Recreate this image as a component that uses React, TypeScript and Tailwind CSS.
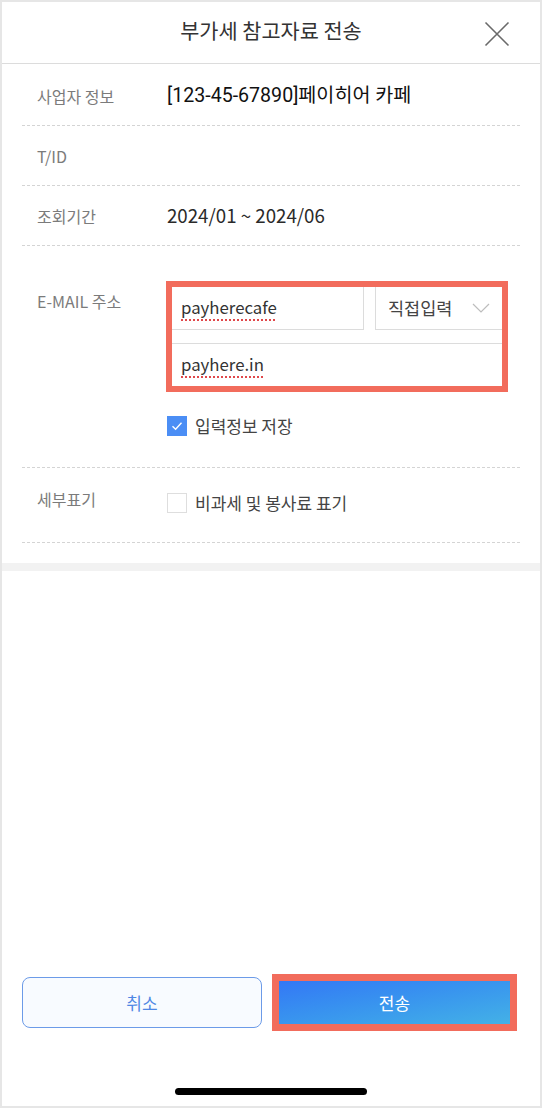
import { useState } from 'react';

const KR = { fontFamily: '"Noto Sans CJK KR", "Noto Sans", sans-serif' };
const RB = { fontFamily: 'Roboto, "Noto Sans CJK KR", sans-serif' };

function CheckBox({ checked }: { checked: boolean }) {
  return checked ? (
    <span className="flex h-[20px] w-[20px] items-center justify-center bg-[#4b8ef5]">
      <svg width="12" height="10" viewBox="0 0 12 10" fill="none">
        <path d="M1.5 5.2L4.6 8.2L10.5 1.8" stroke="#fff" strokeWidth="1.4" />
      </svg>
    </span>
  ) : (
    <span className="h-[20px] w-[20px] border-[1.5px] border-[#dedede] bg-white" />
  );
}

function Row({ label, children }: { label: string; children?: React.ReactNode }) {
  return (
    <div className="flex h-[60px] items-center border-b border-dashed border-[#d4d4d4]">
      <div className="w-[145px] pl-[15px] text-[16px] text-[#7b7b7b]">{label}</div>
      <div className="text-[18.7px] text-[#2a2a2a]">{children}</div>
    </div>
  );
}

export default function App() {
  const [save, setSave] = useState(true);
  const [detail, setDetail] = useState(false);

  return (
    <div className="flex h-[1108px] w-[542px] flex-col border-2 border-[#e6e6e6] bg-white" style={KR}>
      {/* header */}
      <div className="relative flex h-[62px] items-center justify-center border-b-[1.5px] border-[#dcdcdc] pb-[3px]">
        <span className="text-[20.8px] text-[#333]">부가세 참고자료 전송</span>
        <button className="absolute right-[30px] top-[19px]">
          <svg width="26" height="26" viewBox="0 0 26 26" fill="none">
            <path d="M1.5 1.5L24.5 24.5M24.5 1.5L1.5 24.5" stroke="#6a6a6a" strokeWidth="1.6" />
          </svg>
        </button>
      </div>

      <div className="px-[20px]">
        <div className="flex h-[62px] items-center border-b border-dashed border-[#d4d4d4] pt-[3px]">
          <div className="w-[145px] pl-[15px] text-[16px] text-[#7b7b7b]">사업자 정보</div>
          <div className="text-[19.6px] text-[#111]" style={RB}>[123-45-67890]페이히어 카페</div>
        </div>
        <Row label="T/ID" />
        <Row label="조회기간">2024/01 ~ 2024/06</Row>

        {/* email */}
        <div className="flex border-b border-dashed border-[#d4d4d4] pb-[31px] pt-[35px]">
          <div className="w-[144px] pl-[15px] pt-[10px] text-[16px] leading-[20px] text-[#7b7b7b]">E-MAIL 주소</div>
          <div className="flex flex-col">
            <div className="w-[342px] border-[6px] border-[#f26c5c]">
              <div className="flex h-[43px]">
                <div className="flex w-[192px] items-center border-b border-r border-[#dcdcdc] pl-[9px] text-[16.8px] text-[#333]">
                  <span className="underline decoration-[#e0484b] decoration-dotted decoration-[1.5px] underline-offset-[5px]">payherecafe</span>
                </div>
                <div className="ml-[11px] flex flex-1 items-center justify-between border-b border-l border-[#dcdcdc] pl-[12px] pr-[12px] text-[17.5px] text-[#444]">
                  <span>직접입력</span>
                  <svg width="18" height="10" viewBox="0 0 18 10" fill="none">
                    <path d="M1 1L9 9L17 1" stroke="#bdbdbd" strokeWidth="1.2" />
                  </svg>
                </div>
              </div>
              <div className="mt-[13px] flex h-[43px] items-center border-t border-[#dcdcdc] pl-[9px] text-[16.8px] text-[#333]">
                <span className="underline decoration-[#e0484b] decoration-dotted decoration-[1.5px] underline-offset-[5px]">payhere.in</span>
              </div>
            </div>
            <button onClick={() => setSave(!save)} className="ml-[1px] mt-[24px] flex h-[20px] items-center gap-[8px] text-[17px] text-[#444]">
              <CheckBox checked={save} />
              <span>입력정보 저장</span>
            </button>
          </div>
        </div>

        <div className="flex border-b border-dashed border-[#d4d4d4] pb-[29px]">
          <div className="w-[145px] pl-[15px] pt-[21px] text-[16px] leading-[20px] text-[#7b7b7b]">세부표기</div>
          <button onClick={() => setDetail(!detail)} className="mt-[25px] flex h-[20px] items-center gap-[8px] text-[17px] text-[#444]">
            <CheckBox checked={detail} />
            <span>비과세 및 봉사료 표기</span>
          </button>
        </div>
      </div>

      <div className="mt-[20px] h-[8px] bg-[#f2f2f2]" />

      {/* bottom */}
      <div className="mt-auto flex flex-col pb-[11px]">
        <div className="flex items-center gap-[10px] pl-[20px]">
          <button className="h-[51px] w-[240px] rounded-[8px] border-[1.5px] border-[#6c9be8] bg-[#f8fbff] text-[17px] text-[#4f87e4]">
            취소
          </button>
          <div className="h-[57px] w-[245px] border-[7px] border-[#f26c5c]">
            <button className="h-full w-full bg-gradient-to-br from-[#3477f5] to-[#44b1e6] text-[17px] text-white">
              전송
            </button>
          </div>
        </div>
        <div className="mx-auto mt-[57px] h-[7px] w-[192px] rounded-full bg-black" />
      </div>
    </div>
  );
}
